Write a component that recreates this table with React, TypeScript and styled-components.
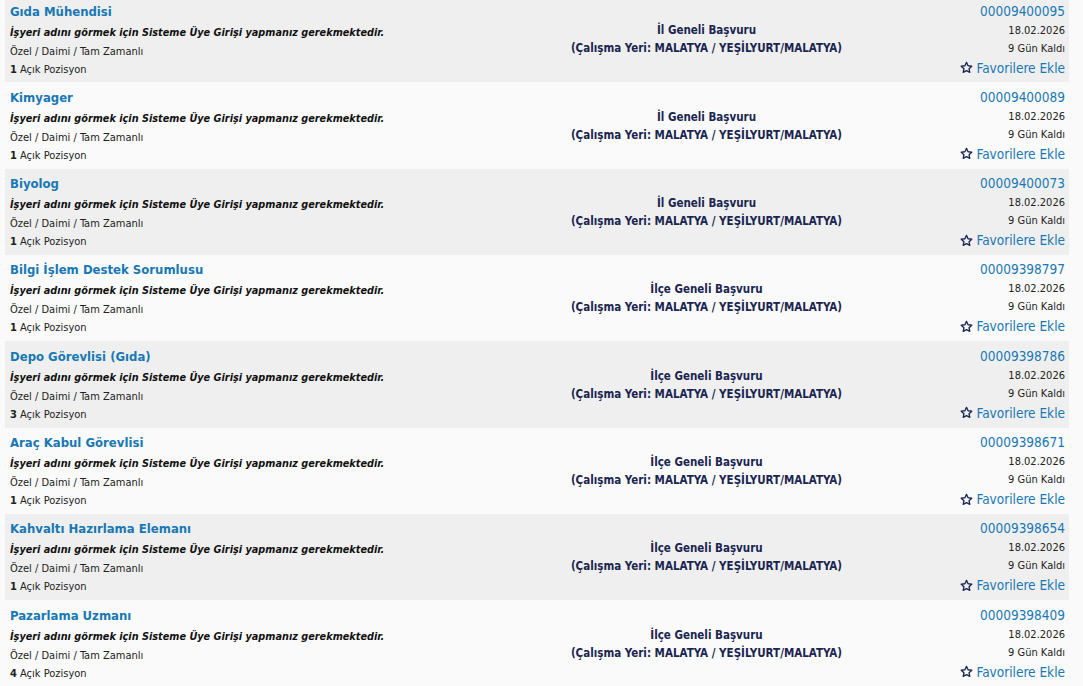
import React from "react";
import styled, { createGlobalStyle } from "styled-components";

const GlobalStyle = createGlobalStyle`
  html, body { margin: 0; padding: 0; }
  body {
    background: #fafafa;
    font-family: "DejaVu Sans Condensed", "DejaVu Sans", Tahoma, sans-serif;
    color: #222;
    overflow: hidden;
  }
`;

type Job = {
  title: string;
  scope: string;
  positions: number;
  id: string;
};

const jobs: Job[] = [
  { title: "Gıda Mühendisi", scope: "İl Geneli Başvuru", positions: 1, id: "00009400095" },
  { title: "Kimyager", scope: "İl Geneli Başvuru", positions: 1, id: "00009400089" },
  { title: "Biyolog", scope: "İl Geneli Başvuru", positions: 1, id: "00009400073" },
  { title: "Bilgi İşlem Destek Sorumlusu", scope: "İlçe Geneli Başvuru", positions: 1, id: "00009398797" },
  { title: "Depo Görevlisi (Gıda)", scope: "İlçe Geneli Başvuru", positions: 3, id: "00009398786" },
  { title: "Araç Kabul Görevlisi", scope: "İlçe Geneli Başvuru", positions: 1, id: "00009398671" },
  { title: "Kahvaltı Hazırlama Elemanı", scope: "İlçe Geneli Başvuru", positions: 1, id: "00009398654" },
  { title: "Pazarlama Uzmanı", scope: "İlçe Geneli Başvuru", positions: 4, id: "00009398409" },
];

const List = styled.div`
  margin: -4px 14px 0 5px;
  display: flex;
  flex-direction: column;
`;

const Row = styled.div<{ $shaded: boolean }>`
  box-sizing: border-box;
  height: 86.33px;
  padding: 4.5px 4px 0 5px;
  display: grid;
  grid-template-columns: 495px 403px 1fr;
  background: ${(p) => (p.$shaded ? "#efefef" : "transparent")};
`;

const Left = styled.div`
  display: flex;
  flex-direction: column;
`;

const Title = styled.a`
  font-size: 13px;
  font-weight: bold;
  line-height: 21px;
  color: #1878b4;
  text-decoration: none;
  white-space: nowrap;
`;

const Notice = styled.div`
  font-size: 10.8px;
  font-weight: bold;
  font-style: italic;
  line-height: 21px;
  color: #111;
  white-space: nowrap;
`;

const Meta = styled.div`
  font-size: 11px;
  line-height: 18px;
  color: #222;
  white-space: nowrap;
  b { font-weight: bold; }
`;

const Middle = styled.div`
  display: flex;
  flex-direction: column;
  align-items: center;
  justify-content: center;
  padding-bottom: 4px;
`;

const Scope = styled.div`
  font-size: 11.5px;
  font-weight: bold;
  line-height: 18px;
  color: #1a2550;
  white-space: nowrap;
`;

const Right = styled.div`
  display: flex;
  flex-direction: column;
  align-items: flex-end;
`;

const JobId = styled.a`
  font-size: 13.5px;
  line-height: 21px;
  color: #1878b4;
  text-decoration: none;
`;

const Small = styled.div`
  font-size: 11px;
  line-height: 18px;
  color: #222;
`;

const Fav = styled.a`
  display: flex;
  align-items: center;
  gap: 3px;
  font-size: 13.5px;
  line-height: 20px;
  color: #1878b4;
  text-decoration: none;
  svg { display: block; }
`;

const Star = () => (
  <svg width="13" height="13" viewBox="0 0 24 24" fill="none" stroke="#1a2550" strokeWidth="2.4" strokeLinejoin="round">
    <polygon points="12,2.5 14.9,8.8 21.8,9.6 16.7,14.3 18.1,21.1 12,17.7 5.9,21.1 7.3,14.3 2.2,9.6 9.1,8.8" />
  </svg>
);

export default function App() {
  return (
    <>
      <GlobalStyle />
      <List>
        {jobs.map((j, i) => (
          <Row key={j.id} $shaded={i % 2 === 0}>
            <Left>
              <Title href="#">{j.title}</Title>
              <Notice>İşyeri adını görmek için Sisteme Üye Girişi yapmanız gerekmektedir.</Notice>
              <Meta>Özel / Daimi / Tam Zamanlı</Meta>
              <Meta>
                <b>{j.positions}</b> Açık Pozisyon
              </Meta>
            </Left>
            <Middle>
              <Scope>{j.scope}</Scope>
              <Scope>(Çalışma Yeri: MALATYA / YEŞİLYURT/MALATYA)</Scope>
            </Middle>
            <Right>
              <JobId href="#">{j.id}</JobId>
              <Small>18.02.2026</Small>
              <Small>9 Gün Kaldı</Small>
              <Fav href="#">
                <Star />
                Favorilere Ekle
              </Fav>
            </Right>
          </Row>
        ))}
      </List>
    </>
  );
}
